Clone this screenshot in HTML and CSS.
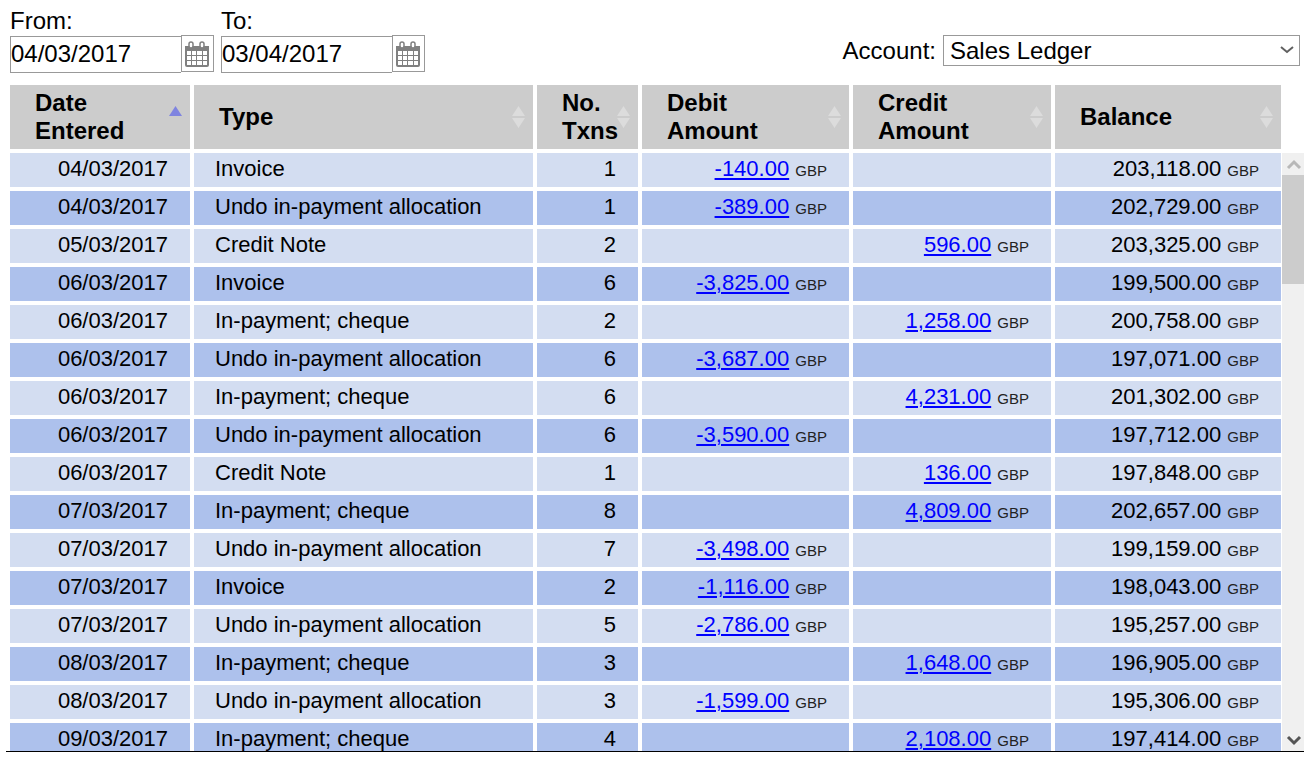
FILE: index.html
```html
<!DOCTYPE html>
<html lang="en">
<head>
<meta charset="utf-8">
<title>Sales Ledger</title>
<link rel="stylesheet" href="styles.css">
</head>
<body>
<svg class="defs" aria-hidden="true">
  <symbol id="calendar" viewBox="0 0 24 26">
    <path fill="#808080" d="M0 5h24v19q0 2-2 2H2q-2 0-2-2z"/>
    <path fill="#fff" d="M2 10h4v4H2zM7 10h4v4H7zM12 10h5v4h-5zM18 10h4v4h-4zM2 15h4v4H2zM7 15h4v4H7zM12 15h5v4h-5zM18 15h4v4h-4zM2 20h4v4H2zM7 20h4v4H7zM12 20h5v4h-5zM18 20h4v4h-4z"/>
    <rect x="4" y="1" width="4" height="6" rx="2" fill="#fff" stroke="#808080" stroke-width="1.5"/>
    <rect x="15" y="1" width="4" height="6" rx="2" fill="#fff" stroke="#808080" stroke-width="1.5"/>
  </symbol>
  <symbol id="sort" viewBox="0 0 13 22">
    <path fill="#dcdcdc" d="M6.500 0L13 10H0zM0 12h13L6.500 22z"/>
  </symbol>
  <symbol id="sort-up" viewBox="0 0 13 22">
    <path fill="#7f84e0" d="M6.500 0L13 10H0z"/>
  </symbol>
</svg>
<main class="page">
  <form class="toolbar">
    <div class="field">
      <label for="from">From:</label>
      <div class="date"><input id="from" type="text" value="04/03/2017"><button type="button" aria-label="Choose from date"><svg class="cal"><use href="#calendar"/></svg></button></div>
    </div>
    <div class="field">
      <label for="to">To:</label>
      <div class="date"><input id="to" type="text" value="03/04/2017"><button type="button" aria-label="Choose to date"><svg class="cal"><use href="#calendar"/></svg></button></div>
    </div>
    <div class="account">
      <label for="account">Account:</label>
      <div class="select">
        <select id="account"><option>Sales Ledger</option></select>
        <svg class="chevron" viewBox="0 0 14 8"><path d="M1 1l6 5 6-5" fill="none" stroke="#606060" stroke-width="2"/></svg>
      </div>
    </div>
  </form>
  <section class="ledger">
    <div class="rows">
      <table>
        <colgroup><col class="c-date"><col><col class="c-txns"><col class="c-debit"><col class="c-credit"><col class="c-balance"></colgroup>
        <thead>
          <tr>
            <th><button type="button"><span>Date<br>Entered</span><svg class="sort"><use href="#sort-up"/></svg></button></th>
            <th><button type="button"><span>Type</span><svg class="sort"><use href="#sort"/></svg></button></th>
            <th><button type="button"><span>No.<br>Txns</span><svg class="sort"><use href="#sort"/></svg></button></th>
            <th><button type="button"><span>Debit<br>Amount</span><svg class="sort"><use href="#sort"/></svg></button></th>
            <th><button type="button"><span>Credit<br>Amount</span><svg class="sort"><use href="#sort"/></svg></button></th>
            <th><button type="button"><span>Balance</span><svg class="sort"><use href="#sort"/></svg></button></th>
          </tr>
        </thead>
        <tbody>
          <tr><td>04/03/2017</td><td>Invoice</td><td>1</td><td><a href="#">-140.00</a> <small>GBP</small></td><td></td><td>203,118.00 <small>GBP</small></td></tr>
          <tr><td>04/03/2017</td><td>Undo in-payment allocation</td><td>1</td><td><a href="#">-389.00</a> <small>GBP</small></td><td></td><td>202,729.00 <small>GBP</small></td></tr>
          <tr><td>05/03/2017</td><td>Credit Note</td><td>2</td><td></td><td><a href="#">596.00</a> <small>GBP</small></td><td>203,325.00 <small>GBP</small></td></tr>
          <tr><td>06/03/2017</td><td>Invoice</td><td>6</td><td><a href="#">-3,825.00</a> <small>GBP</small></td><td></td><td>199,500.00 <small>GBP</small></td></tr>
          <tr><td>06/03/2017</td><td>In-payment; cheque</td><td>2</td><td></td><td><a href="#">1,258.00</a> <small>GBP</small></td><td>200,758.00 <small>GBP</small></td></tr>
          <tr><td>06/03/2017</td><td>Undo in-payment allocation</td><td>6</td><td><a href="#">-3,687.00</a> <small>GBP</small></td><td></td><td>197,071.00 <small>GBP</small></td></tr>
          <tr><td>06/03/2017</td><td>In-payment; cheque</td><td>6</td><td></td><td><a href="#">4,231.00</a> <small>GBP</small></td><td>201,302.00 <small>GBP</small></td></tr>
          <tr><td>06/03/2017</td><td>Undo in-payment allocation</td><td>6</td><td><a href="#">-3,590.00</a> <small>GBP</small></td><td></td><td>197,712.00 <small>GBP</small></td></tr>
          <tr><td>06/03/2017</td><td>Credit Note</td><td>1</td><td></td><td><a href="#">136.00</a> <small>GBP</small></td><td>197,848.00 <small>GBP</small></td></tr>
          <tr><td>07/03/2017</td><td>In-payment; cheque</td><td>8</td><td></td><td><a href="#">4,809.00</a> <small>GBP</small></td><td>202,657.00 <small>GBP</small></td></tr>
          <tr><td>07/03/2017</td><td>Undo in-payment allocation</td><td>7</td><td><a href="#">-3,498.00</a> <small>GBP</small></td><td></td><td>199,159.00 <small>GBP</small></td></tr>
          <tr><td>07/03/2017</td><td>Invoice</td><td>2</td><td><a href="#">-1,116.00</a> <small>GBP</small></td><td></td><td>198,043.00 <small>GBP</small></td></tr>
          <tr><td>07/03/2017</td><td>Undo in-payment allocation</td><td>5</td><td><a href="#">-2,786.00</a> <small>GBP</small></td><td></td><td>195,257.00 <small>GBP</small></td></tr>
          <tr><td>08/03/2017</td><td>In-payment; cheque</td><td>3</td><td></td><td><a href="#">1,648.00</a> <small>GBP</small></td><td>196,905.00 <small>GBP</small></td></tr>
          <tr><td>08/03/2017</td><td>Undo in-payment allocation</td><td>3</td><td><a href="#">-1,599.00</a> <small>GBP</small></td><td></td><td>195,306.00 <small>GBP</small></td></tr>
          <tr><td>09/03/2017</td><td>In-payment; cheque</td><td>4</td><td></td><td><a href="#">2,108.00</a> <small>GBP</small></td><td>197,414.00 <small>GBP</small></td></tr>
        </tbody>
      </table>
    </div>
    <div class="scrollbar" aria-hidden="true">
      <svg class="arrow" viewBox="0 0 22 22"><path d="M6 15l6-6 6 6" fill="none" stroke="#b8b8b8" stroke-width="3"/></svg>
      <div class="track"><div class="thumb"></div></div>
      <svg class="arrow" viewBox="0 0 22 22"><path d="M6 8l6 6 6-6" fill="none" stroke="#555" stroke-width="3"/></svg>
    </div>
  </section>
</main>
</body>
</html>
```
FILE: styles.css
```css
* { box-sizing: border-box; }

body {
  margin: 0;
  background: #fff;
  color: #000;
  font: 24px/28px "Liberation Sans", Arial, sans-serif;
}

.defs { position: absolute; width: 0; height: 0; }

.page {
  display: flex;
  flex-direction: column;
  height: 100vh;
  padding: 7px 11px 10px 6px;
}

.toolbar {
  display: flex;
  gap: 7px;
  padding: 0 4px;
}

.date { display: flex; }

.date input {
  width: 171px;
  height: 37px;
  margin-top: 1px;
  padding: 0 0 1px;
  border: 1px solid #999;
  border-right: 0;
  font: inherit;
}

.date button {
  display: flex;
  align-items: center;
  justify-content: center;
  width: 33px;
  height: 37px;
  padding: 0 1px 0 0;
  border: 1px solid #999;
  background: #fff;
}

.cal { width: 24px; height: 26px; }

.account {
  display: flex;
  align-items: center;
  gap: 7px;
  height: 31px;
  margin: 28px 0 0 auto;
}

.select { position: relative; }

.select select {
  display: block;
  width: 357px;
  height: 31px;
  padding: 0 24px 0 6px;
  border: 1px solid #999;
  border-radius: 0;
  appearance: none;
  background: #fff;
  color: #000;
  font: inherit;
}

.chevron {
  position: absolute;
  top: 11px;
  right: 6px;
  width: 14px;
  height: 8px;
  pointer-events: none;
}

.ledger {
  display: flex;
  flex: 1;
  min-height: 0;
  margin-top: 8px;
  border-bottom: 1px solid #000;
}

.rows {
  flex: 1;
  min-width: 0;
  overflow: hidden;
}

table {
  width: 100%;
  table-layout: fixed;
  border-spacing: 4px;
}

.c-date { width: 180px; }
.c-txns { width: 101px; }
.c-debit { width: 207px; }
.c-credit { width: 198px; }
.c-balance { width: 226px; }

th {
  height: 64px;
  padding: 0;
  background: #ccc;
}

th button {
  display: flex;
  align-items: center;
  width: 100%;
  padding: 0 8px 0 25px;
  border: 0;
  background: none;
  color: #000;
  font: inherit;
  font-weight: bold;
  text-align: left;
}

th span {
  flex: 1;
  min-width: 0;
}

.sort {
  flex: none;
  width: 13px;
  height: 22px;
}

td {
  height: 34px;
  padding: 0 22px 2px 21px;
  background: #d3ddf1;
  font-size: 22px;
  line-height: 32px;
  text-align: right;
  white-space: nowrap;
}

tr:nth-child(even) td { background: #adc1ec; }
td:nth-child(2) { text-align: left; }

td small {
  color: #222;
  font-size: 15px;
  line-height: 1;
}

a { color: #00f; }

.scrollbar {
  display: flex;
  flex-direction: column;
  width: 22px;
  margin: 72px 0 0 -3px;
  background: #f0f0f0;
}

.arrow {
  flex: none;
  width: 22px;
  height: 22px;
}

.track { flex: 1; }

.thumb {
  height: 109px;
  background: #ccc;
}
```
